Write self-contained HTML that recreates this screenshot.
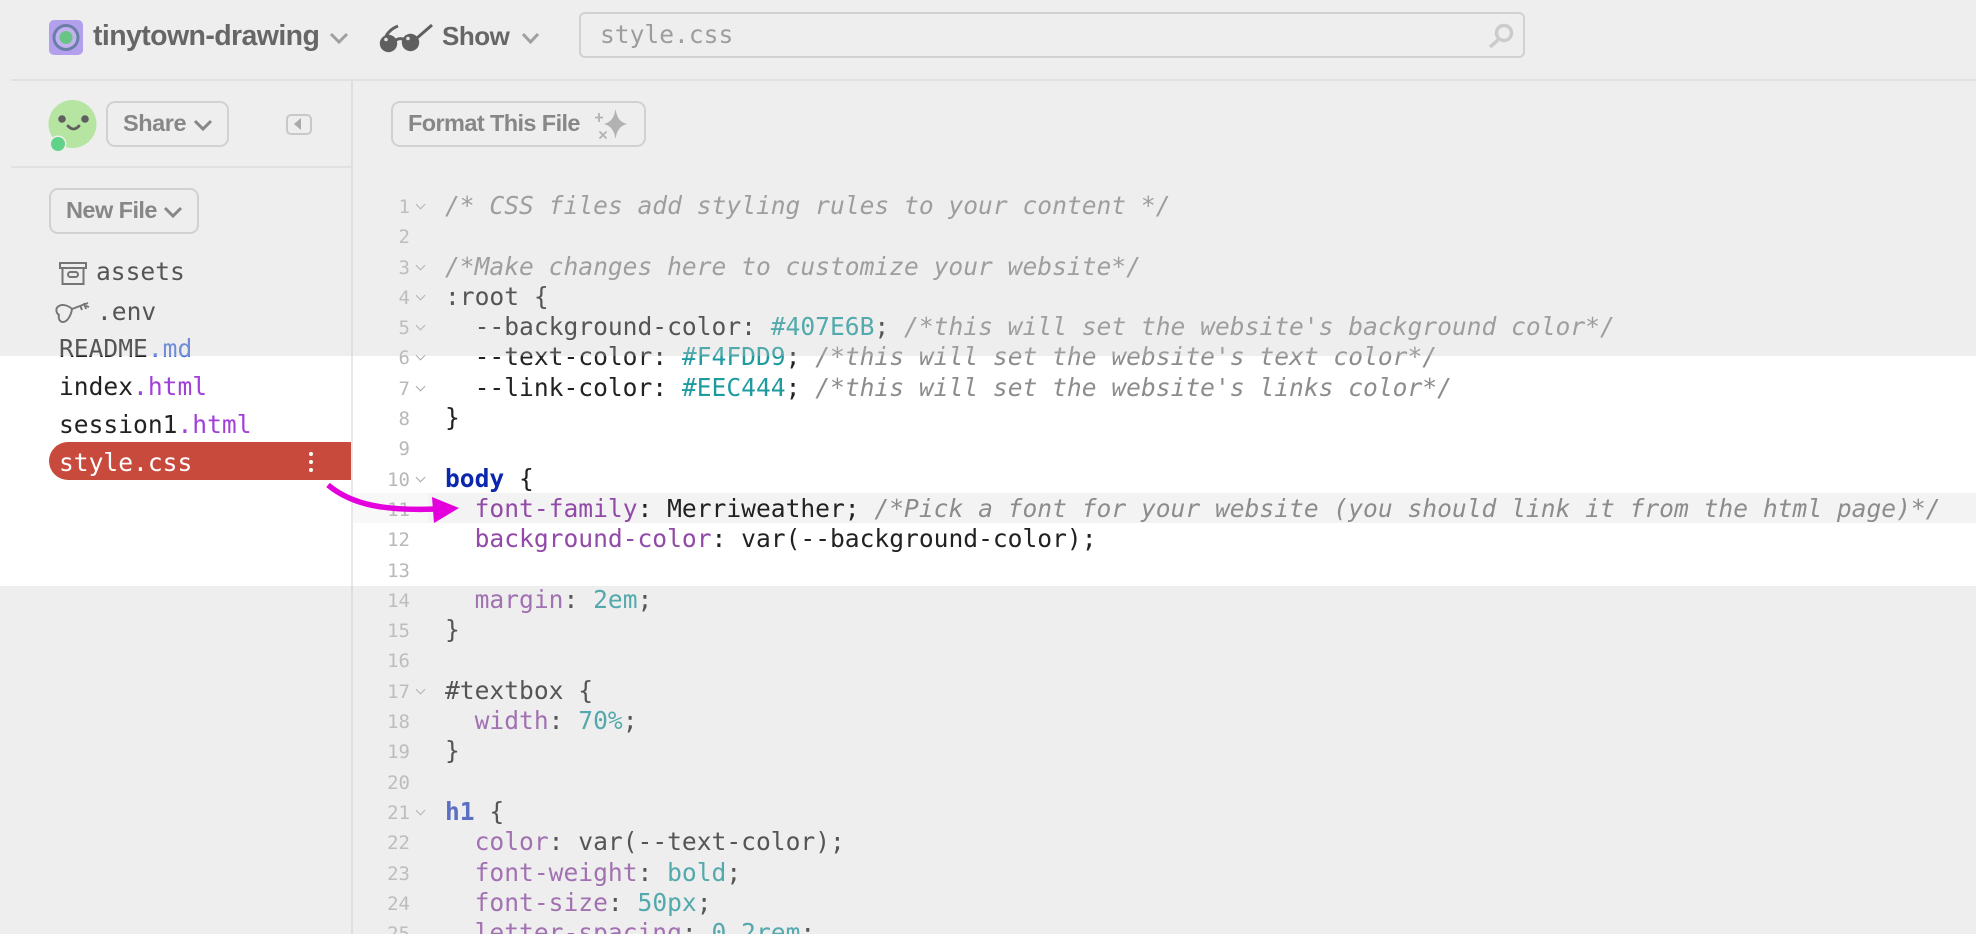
<!DOCTYPE html>
<html lang="en">
<head>
<meta charset="utf-8">
<title>style.css</title>
<style>
html,body{margin:0;padding:0;background:#fff;}
#page{position:relative;width:1976px;height:934px;overflow:hidden;background:#fff;font-family:"Liberation Sans",sans-serif;}
.abs{position:absolute;}
.ov{position:absolute;left:0;width:1976px;background:rgba(200,200,200,.31);z-index:50;}
.t{position:absolute;white-space:pre;line-height:30px;height:30px;font-weight:bold;}
.btn{position:absolute;box-sizing:border-box;border:2px solid #d6d6d6;border-radius:9px;height:46px;}
.m{font-family:"DejaVu Sans Mono","Liberation Mono",monospace;font-size:24.6px;}
.f{position:absolute;left:59px;white-space:pre;line-height:30px;height:30px;color:#222;}
.md{color:#4a73df;}.ht{color:#a040d8;}
#code{position:absolute;left:0;top:191px;width:1976px;z-index:3;}
.ln{position:relative;height:30.3px;line-height:30.3px;padding-left:445px;white-space:pre;color:#222;font-family:"DejaVu Sans Mono","Liberation Mono",monospace;font-size:24.6px;}
.n{position:absolute;left:370px;top:1px;width:40px;text-align:right;font-style:normal;font-size:19px;color:#b8b8b8;}
.c::after{content:"";position:absolute;left:416.5px;top:10px;width:6px;height:6px;border-right:1.6px solid #aaa;border-bottom:1.6px solid #aaa;transform:rotate(45deg);}
.cm{color:#8c8c8c;font-style:italic;}
.p{color:#924aa8;}
.v{color:#1f9ba0;}
.b{color:#0a27ad;font-weight:bold;}
.h{color:#2d48bd;font-weight:bold;}
</style>
</head>
<body>
<div id="page">
  <!-- highlighted line -->
  <div class="abs" style="left:352px;top:493px;width:1624px;height:30px;background:#f3f3f3;"></div>
  <div class="abs" style="left:352px;top:493px;width:76px;height:30px;background:#f8f8f8;"></div>

  <!-- rules -->
  <div class="abs" style="left:11px;top:79px;width:1965px;height:2px;background:#ececec;"></div>
  <div class="abs" style="left:11px;top:166px;width:340px;height:2px;background:#ececec;"></div>
  <div class="abs" style="left:351px;top:81px;width:2px;height:853px;background:#e8e8e8;"></div>

  <!-- top bar -->
  <svg class="abs" style="left:0;top:0;" width="1976" height="240" viewBox="0 0 1976 240">
    <rect x="49" y="20" width="34" height="35" rx="5" fill="#aa8efc"/>
    <circle cx="66" cy="37.5" r="12" fill="#c0a8ff" stroke="#405e9a" stroke-width="3"/>
    <circle cx="66" cy="37.5" r="6.5" fill="#3dc467"/>
    <path d="M331 34l8 8 8-8M523 34l7.500 8 7.500-8" fill="none" stroke="#8e8e8e" stroke-width="3"/>
    <!-- glasses -->
    <circle cx="388.500" cy="43.500" r="8.700" fill="#303030"/>
    <circle cx="410.500" cy="42.500" r="8.700" fill="#303030"/>
    <path d="M396 40q3-2 7-1M386 36q4-7 12-10M417 38l15-13" fill="none" stroke="#303030" stroke-width="3"/>
    <circle cx="386" cy="39.500" r="1.800" fill="#eee"/><circle cx="408" cy="38.500" r="1.800" fill="#eee"/>
    <!-- search -->
    <circle cx="1504" cy="33" r="7.500" fill="none" stroke="#cdcdcd" stroke-width="3.500"/>
    <path d="M1498 40l-8 7" fill="none" stroke="#cdcdcd" stroke-width="3.500"/>
    <!-- avatar -->
    <circle cx="72.500" cy="124" r="24" fill="#aef292"/>
    <circle cx="62" cy="119" r="3.800" fill="#303030"/><circle cx="85" cy="119" r="3.800" fill="#303030"/>
    <path d="M68 126q5.500 6 11 0" fill="none" stroke="#303030" stroke-width="2.800" stroke-linecap="round"/>
    <circle cx="58" cy="144" r="8.500" fill="#fff"/><circle cx="58" cy="144" r="7" fill="#34d86c"/>
    <!-- chevrons -->
    <path d="M195 121l8 8 8-8M165 208l8 8 8-8" fill="none" stroke="#6b6b6b" stroke-width="3"/>
    <!-- collapse -->
    <rect x="287" y="115" width="24" height="19" rx="4" fill="none" stroke="#c8c8c8" stroke-width="2"/>
    <path d="M301 118v12l-7-6z" fill="#9d9d9d"/>
  </svg>
  <svg class="abs" style="left:590px;top:105px;" width="50" height="38" viewBox="590 105 50 38">
    <path d="M615.500 109C617 118 620 122 627 124C620 126 617 130 615.500 139C614 130 611 126 604 124C611 122 614 118 615.500 109Z" fill="#a9a9a9"/>
    <path d="M599 113v9M595 117.500h8M599.500 131.500l7 7M606.500 131.500l-7 7" fill="none" stroke="#a9a9a9" stroke-width="1.800"/>
  </svg>

  <div class="t" style="left:93px;top:21px;font-size:28.5px;letter-spacing:-.6px;color:#3a3a3a;">tinytown-drawing</div>
  <div class="t" style="left:442px;top:21px;font-size:26px;letter-spacing:-.5px;color:#3a3a3a;">Show</div>
  <div class="abs" style="left:579px;top:12px;width:946px;height:46px;box-sizing:border-box;border:2px solid #d6d6d6;border-radius:6px;"></div>
  <div class="t m" style="left:600px;top:20px;font-weight:normal;color:#8a8a8a;">style.css</div>

  <div class="btn" style="left:106px;top:101px;width:123px;"></div>
  <div class="t" style="left:123px;top:108px;font-size:23.5px;letter-spacing:-.45px;color:#6b6b6b;">Share</div>
  <div class="btn" style="left:391px;top:101px;width:255px;"></div>
  <div class="t" style="left:408px;top:108px;font-size:23.5px;letter-spacing:-.6px;color:#6b6b6b;">Format This File</div>
  <div class="btn" style="left:49px;top:188px;width:150px;"></div>
  <div class="t" style="left:66px;top:195px;font-size:23.5px;letter-spacing:-.55px;color:#6b6b6b;">New File</div>

  <!-- file list -->
  <svg class="abs" style="left:50px;top:255px;" width="50" height="70" viewBox="50 255 50 70">
    <path d="M60 263h26v5H60zM62.500 268v16h21v-16" fill="none" stroke="#505050" stroke-width="2"/>
    <rect x="68" y="272" width="10" height="5" rx="2.500" fill="none" stroke="#505050" stroke-width="2"/>
    <path d="M72 309C68 305 62 304 59 306C55 308 56 313 59 315C58 319 60 322 63 322C67 322 71 316 72 309ZM72 309L88 303M80 305l2 5M84 303l2 6M86 306l3 1" fill="none" stroke="#505050" stroke-width="1.900"/>
  </svg>
  <div class="f m" style="left:96px;top:257px;">assets</div>
  <div class="f m" style="left:97px;top:297px;">.env</div>
  <div class="f m" style="top:334px;">README<span class="md">.md</span></div>
  <div class="f m" style="top:372px;">index<span class="ht">.html</span></div>
  <div class="f m" style="top:410px;">session1<span class="ht">.html</span></div>
  <div class="abs" style="left:49px;top:442px;width:302px;height:38px;background:#c84a3d;border-radius:19px 0 0 19px;"></div>
  <div class="f m" style="top:448px;color:#fff;">style.css</div>
  <svg class="abs" style="left:306px;top:450px;" width="10" height="24" viewBox="0 0 10 24"><circle cx="5" cy="4" r="2" fill="#fff"/><circle cx="5" cy="12" r="2" fill="#fff"/><circle cx="5" cy="20" r="2" fill="#fff"/></svg>

  <!-- code -->
  <div id="code">
<div class="ln c"><i class="n">1</i><span class="cm">/* CSS files add styling rules to your content */</span></div>
<div class="ln"><i class="n">2</i></div>
<div class="ln c"><i class="n">3</i><span class="cm">/*Make changes here to customize your website*/</span></div>
<div class="ln c"><i class="n">4</i>:root {</div>
<div class="ln c"><i class="n">5</i>  --background-color: <span class="v">#407E6B</span>; <span class="cm">/*this will set the website's background color*/</span></div>
<div class="ln c"><i class="n">6</i>  --text-color: <span class="v">#F4FDD9</span>; <span class="cm">/*this will set the website's text color*/</span></div>
<div class="ln c"><i class="n">7</i>  --link-color: <span class="v">#EEC444</span>; <span class="cm">/*this will set the website's links color*/</span></div>
<div class="ln"><i class="n">8</i>}</div>
<div class="ln"><i class="n">9</i></div>
<div class="ln c"><i class="n">10</i><span class="b">body</span> {</div>
<div class="ln c"><i class="n">11</i>  <span class="p">font-family</span>: Merriweather; <span class="cm">/*Pick a font for your website (you should link it from the html page)*/</span></div>
<div class="ln"><i class="n">12</i>  <span class="p">background-color</span>: var(--background-color);</div>
<div class="ln"><i class="n">13</i></div>
<div class="ln"><i class="n">14</i>  <span class="p">margin</span>: <span class="v">2em</span>;</div>
<div class="ln"><i class="n">15</i>}</div>
<div class="ln"><i class="n">16</i></div>
<div class="ln c"><i class="n">17</i>#textbox {</div>
<div class="ln"><i class="n">18</i>  <span class="p">width</span>: <span class="v">70%</span>;</div>
<div class="ln"><i class="n">19</i>}</div>
<div class="ln"><i class="n">20</i></div>
<div class="ln c"><i class="n">21</i><span class="h">h1</span> {</div>
<div class="ln"><i class="n">22</i>  <span class="p">color</span>: var(--text-color);</div>
<div class="ln"><i class="n">23</i>  <span class="p">font-weight</span>: <span class="v">bold</span>;</div>
<div class="ln"><i class="n">24</i>  <span class="p">font-size</span>: <span class="v">50px</span>;</div>
<div class="ln"><i class="n">25</i>  <span class="p">letter-spacing</span>: <span class="v">0.2rem</span>;</div>
  </div>

  <!-- dim overlays -->
  <div class="ov" style="top:0;height:356px;"></div>
  <div class="ov" style="top:586px;height:348px;"></div>

  <!-- arrow -->
  <svg class="abs" style="left:320px;top:475px;z-index:60;" width="150" height="60" viewBox="320 475 150 60">
    <path d="M328 485C352 505 385 511 436 509" fill="none" stroke="#e300dc" stroke-width="5.500"/>
    <path d="M432 497L459 508L434 523Z" fill="#e300dc"/>
  </svg>
</div>
</body>
</html>
